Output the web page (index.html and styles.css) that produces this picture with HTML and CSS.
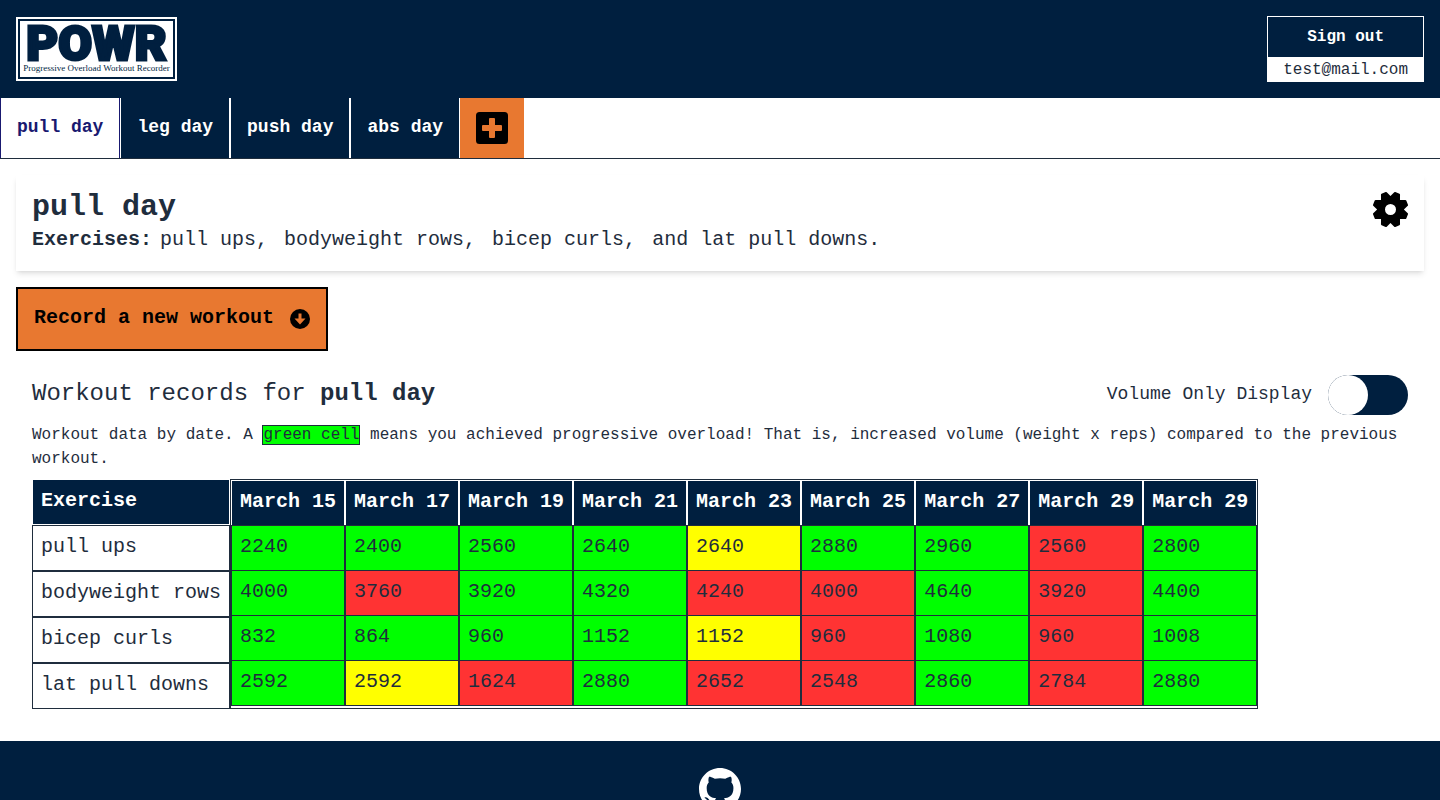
FILE: index.html
```html
<!DOCTYPE html>
<html lang="en">
<head>
<meta charset="utf-8">
<meta name="viewport" content="width=device-width, initial-scale=1">
<title>POWR</title>
<link rel="stylesheet" href="styles.css">
</head>
<body>
<header class="site-header">
  <a class="logo" href="#"><span class="logo-inner"><span class="logo-name">POWR</span><span class="logo-tag">Progressive Overload Workout Recorder</span></span></a>
  <div class="account">
    <button class="sign-out" type="button">Sign out</button>
    <span class="email">test@mail.com</span>
  </div>
</header>
<nav class="tabs">
  <button class="tab tab-active" type="button">pull day</button>
  <button class="tab" type="button">leg day</button>
  <button class="tab" type="button">push day</button>
  <button class="tab" type="button">abs day</button>
  <button class="tab-add" type="button" aria-label="Add routine">
    <svg width="32" height="32" viewBox="0 0 32 32"><path fill-rule="evenodd" d="M3.500 0h25A3.500 3.500 0 0 1 32 3.500v25a3.500 3.500 0 0 1-3.500 3.500h-25A3.500 3.500 0 0 1 0 28.500v-25A3.500 3.500 0 0 1 3.500 0zM14 6q-1 0-1 1v6H7q-1 0-1 1v4q0 1 1 1h6v6q0 1 1 1h4q1 0 1-1v-6h6q1 0 1-1v-4q0-1-1-1h-6V7q0-1-1-1z"/></svg>
  </button>
</nav>
<main>
  <section class="card">
    <div>
      <h1 class="card-title">pull day</h1>
      <div class="exercises"><strong class="exercises-label">Exercises:</strong><span>pull ups,</span><span>bodyweight rows,</span><span>bicep curls,</span><span>and lat pull downs.</span></div>
    </div>
    <button class="settings" type="button" aria-label="Settings">
      <svg width="36" height="37" viewBox="-18.500 -18.500 36 37">
        <defs><path id="tooth" d="M-4.200-12L-2.200-17H2.200L4.200-12z" stroke="#000" stroke-width="2" stroke-linejoin="round"/></defs>
        <circle r="9.500" fill="none" stroke="#000" stroke-width="8"/>
        <use href="#tooth" transform="rotate(22.500)"/><use href="#tooth" transform="rotate(67.500)"/><use href="#tooth" transform="rotate(112.500)"/><use href="#tooth" transform="rotate(157.500)"/><use href="#tooth" transform="rotate(202.500)"/><use href="#tooth" transform="rotate(247.500)"/><use href="#tooth" transform="rotate(292.500)"/><use href="#tooth" transform="rotate(337.500)"/>
      </svg>
    </button>
  </section>
  <button class="record" type="button">Record a new workout
    <svg width="20" height="20" viewBox="0 0 20 20"><circle cx="10" cy="10" r="10"/><path fill="#e87830" d="M8.500 4.500h3V9.500H15.500L10 15.500 4.500 9.500h4z"/></svg>
  </button>
  <section class="records">
    <div class="records-head">
      <h2 class="records-title">Workout records for <strong>pull day</strong></h2>
      <label class="toggle"><span class="toggle-text">Volume Only Display</span> <input class="switch" type="checkbox" role="switch"></label>
    </div>
    <p class="note">Workout data by date. A <span class="green-cell">green cell</span> means you achieved progressive overload! That is, increased volume (weight x reps) compared to the previous workout.</p>
    <div class="tables">
      <table class="names">
        <thead><tr><th>Exercise</th></tr></thead>
        <tbody><tr><td>pull ups</td></tr><tr><td>bodyweight rows</td></tr><tr><td>bicep curls</td></tr><tr><td>lat pull downs</td></tr></tbody>
      </table>
      <div class="volumes-frame">
      <table class="volumes">
        <thead><tr><th>March 15</th><th>March 17</th><th>March 19</th><th>March 21</th><th>March 23</th><th>March 25</th><th>March 27</th><th>March 29</th><th>March 29</th></tr></thead>
        <tbody>
          <tr><td class="up">2240</td><td class="up">2400</td><td class="up">2560</td><td class="up">2640</td><td class="same">2640</td><td class="up">2880</td><td class="up">2960</td><td class="down">2560</td><td class="up">2800</td></tr>
          <tr><td class="up">4000</td><td class="down">3760</td><td class="up">3920</td><td class="up">4320</td><td class="down">4240</td><td class="down">4000</td><td class="up">4640</td><td class="down">3920</td><td class="up">4400</td></tr>
          <tr><td class="up">832</td><td class="up">864</td><td class="up">960</td><td class="up">1152</td><td class="same">1152</td><td class="down">960</td><td class="up">1080</td><td class="down">960</td><td class="up">1008</td></tr>
          <tr><td class="up">2592</td><td class="same">2592</td><td class="down">1624</td><td class="up">2880</td><td class="down">2652</td><td class="down">2548</td><td class="up">2860</td><td class="down">2784</td><td class="up">2880</td></tr>
        </tbody>
      </table>
      </div>
    </div>
  </section>
</main>
<footer class="site-footer">
  <a class="github" href="#" aria-label="GitHub"><svg width="42" height="42" viewBox="0 0 16 16" fill="#fff"><path d="M8 0C3.580 0 0 3.580 0 8c0 3.540 2.290 6.530 5.470 7.590.4.070.550-.170.550-.380 0-.190-.010-.820-.010-1.490-2.010.370-2.530-.490-2.690-.940-.090-.230-.480-.940-.820-1.130-.280-.150-.680-.520-.010-.530.630-.010 1.080.580 1.230.820.720 1.210 1.870.870 2.330.660.070-.520.280-.870.510-1.070-1.780-.2-3.640-.890-3.640-3.950 0-.870.310-1.590.820-2.150-.080-.2-.360-1.020.080-2.120 0 0 .670-.210 2.200.820.640-.180 1.320-.270 2-.270s1.360.090 2 .270c1.530-1.040 2.200-.820 2.200-.820.440 1.100.160 1.920.080 2.120.510.560.820 1.270.820 2.150 0 3.070-1.870 3.750-3.650 3.950.290.250.540.730.540 1.480 0 1.070-.010 1.930-.010 2.200 0 .210.150.460.550.380A8.010 8.010 0 0 0 16 8c0-4.420-3.580-8-8-8z"/></svg></a>
</footer>
</body>
</html>
```
FILE: styles.css
```css
* { box-sizing: border-box; margin: 0; padding: 0; }
body {
  font-family: "Liberation Mono", monospace;
  font-size: 16px;
  line-height: 24px;
  color: #1f2d3d;
  background: #fff;
}
button { font: inherit; cursor: pointer; }
svg { display: block; }

.site-header {
  display: flex;
  justify-content: space-between;
  align-items: center;
  padding: 16px;
  background: #001f3f;
}
.logo {
  padding: 2px;
  border: 2px solid #fff;
  color: #001f3f;
  text-decoration: none;
}
.logo-inner {
  display: flex;
  flex-direction: column;
  align-items: center;
  width: 153px;
  height: 56px;
  background: #fff;
}
.logo-name {
  font: 900 49px/45px Roboto, sans-serif;
  -webkit-text-stroke: 3px #001f3f;
}
.logo-tag { font: 9px/4px "Liberation Serif", serif; white-space: nowrap; }
.account { display: flex; flex-direction: column; }
.sign-out {
  padding: 8px 16px;
  border: 1px solid #fff;
  background: #001f3f;
  color: #fff;
  font-weight: 700;
  line-height: 24px;
}
.email { padding: 0 16px; background: #fff; }

.tabs { display: flex; border-bottom: 1px solid #1f2d3d; }
.tab {
  padding: 15px 16px 17px;
  border: solid #fff;
  border-width: 0 1px;
  background: #001f3f;
  color: #fff;
  font-size: 18px;
  font-weight: 700;
  line-height: 28px;
}
.tab-active { border-color: #191970; background: #fff; color: #191970; }
.tab-add { padding: 14px 16px; border: 0; background: #e87830; }

.card {
  display: flex;
  justify-content: space-between;
  align-items: flex-start;
  margin: 16px;
  padding: 16px;
  box-shadow: 0 4px 6px -1px rgba(0, 0, 0, .1), 0 2px 4px -2px rgba(0, 0, 0, .1);
}
.card-title { font-size: 30px; line-height: 33px; }
.exercises {
  display: flex;
  flex-wrap: wrap;
  column-gap: 16px;
  font-size: 20px;
  line-height: 31px;
}
.exercises-label { margin-right: -8px; }
.settings { border: 0; background: none; }

.record {
  display: flex;
  align-items: center;
  gap: 16px;
  margin: 0 16px;
  padding: 15px 16px 17px;
  border: 2px solid #000;
  background: #e87830;
  color: #000;
  font-size: 20px;
  font-weight: 700;
  line-height: 28px;
}
.record svg { margin-top: 2px; }

.records { padding: 24px 32px 32px; }
.records-head { display: flex; justify-content: space-between; align-items: center; }
.records-title { padding-bottom: 2px; font-size: 24px; font-weight: 400; line-height: 32px; }
.toggle { display: flex; align-items: center; gap: 16px; font-size: 18px; line-height: 28px; }
.toggle-text { padding-bottom: 2px; }
.switch {
  appearance: none;
  width: 80px;
  height: 40px;
  border-radius: 20px;
  background: #001f3f;
}
.switch::before {
  content: "";
  display: block;
  width: 40px;
  height: 40px;
  border-radius: 50%;
  background: #fff;
}
.switch:checked::before { margin-left: 40px; }
.note { margin: 8px 0; }
.green-cell { border: 1px solid #1f2d3d; background: #0f0; }

.tables { display: flex; overflow-x: auto; font-size: 20px; line-height: 28px; }
table { border-spacing: 0; }
th, td { padding: 7px 8px 9px; text-align: left; white-space: nowrap; }
th { background: #001f3f; color: #fff; }
.names th { border: 1px solid #fff; }
.names td { border: 1px solid #1f2d3d; }
.volumes-frame { border: 1px solid #1f2d3d; }
.volumes th { border: solid #fff; border-width: 1px 1px 0; }
.volumes td { border: solid #1f2d3d; border-width: 1px 1px 0; }
.volumes tr:last-child td { border-bottom-width: 1px; }
.up { background: #0f0; }
.same { background: #ff0; }
.down { background: #f33; }

.site-footer { display: flex; justify-content: center; padding: 27px 16px; background: #001f3f; }
```
